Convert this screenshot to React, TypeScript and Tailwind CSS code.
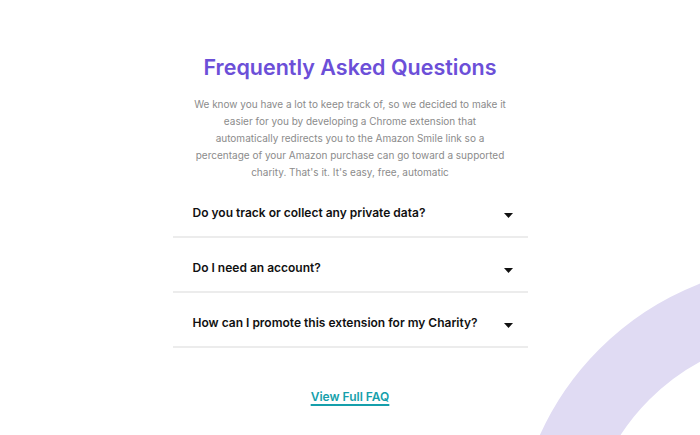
import { useState } from "react";

const faqs = [
  "Do you track or collect any private data?",
  "Do I need an account?",
  "How can I promote this extension for my Charity?",
];

function Caret() {
  return (
    <svg width="9" height="5" viewBox="0 0 9 5" className="mt-1 shrink-0">
      <path d="M0 0h9L4.5 5z" fill="#111" />
    </svg>
  );
}

export default function App() {
  const [open, setOpen] = useState<number | null>(null);

  return (
    <div
      className="relative h-[435px] w-full overflow-hidden bg-white"
      style={{ fontFamily: "Inter, 'Open Sans', sans-serif" }}
    >
      {/* Decorative ring */}
      <div className="pointer-events-none absolute left-[514px] top-[264px] h-[582px] w-[582px] rounded-full border-[71px] border-[#e0dbf3]" />

      <div className="relative mx-auto flex w-[355px] flex-col items-center pt-[50px]">
        <h1 className="whitespace-nowrap text-[21.5px] font-semibold leading-[34px] text-[#6c4fd8]">
          Frequently Asked Questions
        </h1>
        <p className="mt-[12px] whitespace-nowrap text-center text-[10px] leading-[17px] text-[#8b8b8b]">
          We know you have a lot to keep track of, so we decided to make it
          <br />
          easier for you by developing a Chrome extension that
          <br />
          automatically redirects you to the Amazon Smile link so a
          <br />
          percentage of your Amazon purchase can go toward a supported
          <br />
          charity. That's it. It's easy, free, automatic
        </p>

        {/* Accordion */}
        <div className="mt-[2px] w-full">
          {faqs.map((q, i) => (
            <button
              key={q}
              onClick={() => setOpen(open === i ? null : i)}
              className="flex w-full items-center justify-between border-b-2 border-[#ececec] pb-[13px] pl-5 pr-[15px] pt-[20px] text-left"
            >
              <span className="text-[12px] font-semibold leading-5 text-[#111]">
                {q}
              </span>
              <Caret />
            </button>
          ))}
        </div>

        <a
          href="#"
          className="mt-[39px] text-[12px] font-semibold leading-5 text-[#159fab] underline decoration-2 underline-offset-[3px]"
        >
          View Full FAQ
        </a>
      </div>
    </div>
  );
}
